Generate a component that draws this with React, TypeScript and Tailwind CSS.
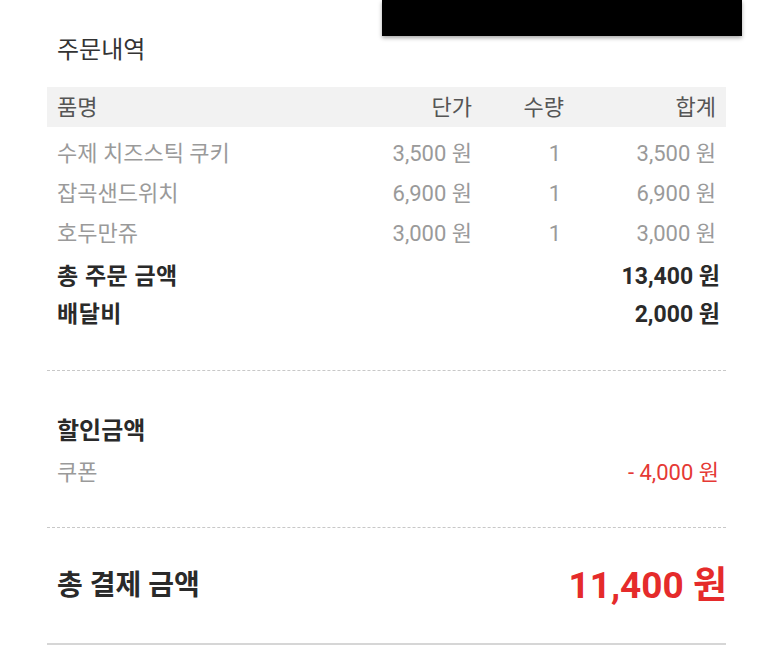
// 주문 상세 - 주문내역 / 할인금액 / 총 결제 금액

const items = [
  { name: '수제 치즈스틱 쿠키', price: '3,500 원', qty: 1, total: '3,500 원' },
  { name: '잡곡샌드위치', price: '6,900 원', qty: 1, total: '6,900 원' },
  { name: '호두만쥬', price: '3,000 원', qty: 1, total: '3,000 원' },
];

const font = 'font-["Roboto","Noto_Sans_CJK_KR",sans-serif]';

export default function App() {
  return (
    <div className={`relative min-h-screen bg-white ${font}`}>
      {/* 상단 가림 박스 */}
      <div className="absolute left-[382px] top-0 h-[36px] w-[360px] bg-black shadow-[0_2px_4px_rgba(0,0,0,0.35)]" />

      <div className="px-[47px] pt-[33px]">
        <h2 className="px-[10px] text-[24px] leading-[34px] text-[#333]">주문내역</h2>

        {/* 테이블 헤더 */}
        <div className="mt-[20px] grid h-[40px] grid-cols-[1fr_120px_92px_152px] items-center bg-[#f2f2f2] px-[10px] text-[22px] text-[#555]">
          <span>품명</span>
          <span className="text-right">단가</span>
          <span className="text-right">수량</span>
          <span className="text-right">합계</span>
        </div>

        {/* 품목 */}
        <div className="px-[10px] pt-[6px] text-[22px] text-[#9a9a9a]">
          {items.map((item) => (
            <div key={item.name} className="grid h-[40px] grid-cols-[1fr_120px_92px_152px] items-center">
              <span>{item.name}</span>
              <span className="text-right">{item.price}</span>
              <span className="pr-[3px] text-right">{item.qty}</span>
              <span className="text-right">{item.total}</span>
            </div>
          ))}
          <div className="mt-[4px] flex h-[40px] items-center justify-between text-[23px] font-bold text-[#2a2a2a]">
            <span className="tracking-[0.5px]">총 주문 금액</span>
            <span className="-mr-[4px]">13,400 원</span>
          </div>
          <div className="flex h-[36px] items-center justify-between text-[23px] font-bold text-[#2a2a2a]">
            <span className="tracking-[0.5px]">배달비</span>
            <span className="-mr-[4px]">2,000 원</span>
          </div>
        </div>

        <div className="mt-[37px] border-t border-dashed border-[#c8c8c8]" />

        {/* 할인금액 */}
        <div className="px-[10px] pt-[44px] pb-[38px]">
          <h3 className="text-[24px] font-bold leading-[32px] text-[#2a2a2a]">할인금액</h3>
          <div className="mt-[10px] flex items-center justify-between text-[22px] leading-[32px]">
            <span className="text-[#9a9a9a]">쿠폰</span>
            <span className="-mr-[3px] text-[#e53935]">- 4,000 원</span>
          </div>
        </div>

        <div className="border-t border-dashed border-[#c8c8c8]" />

        {/* 총 결제 금액 */}
        <div className="flex h-[115px] items-center justify-between px-[10px]">
          <span className="text-[28px] font-bold text-[#2a2a2a]">총 결제 금액</span>
          <span className="-mr-[11px] text-[37px] font-bold text-[#e52b2b]">11,400 원</span>
        </div>

        <div className="border-t-2 border-[#d6d6d6]" />
      </div>
    </div>
  );
}
